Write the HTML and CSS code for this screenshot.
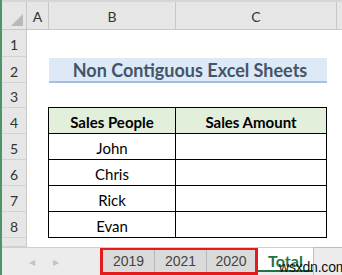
FILE: index.html
```html
<!DOCTYPE html>
<html>
<head>
<meta charset="utf-8">
<link rel="stylesheet" href="styles.css">
</head>
<body>
<div class="app">
  <div class="topstrip"></div>
  <div class="sheet">
    <div class="corner"><span class="tri"></span></div>
    <div class="colhdr">A</div>
    <div class="colhdr">B</div>
    <div class="colhdr c">C</div>
    <div class="colhdr last"></div>

    <div class="rowhdr">1</div><div class="blank span4"></div>
    <div class="rowhdr">2</div><div class="blank"></div><div class="title">Non Contiguous Excel Sheets</div><div class="blank"></div>
    <div class="rowhdr">3</div><div class="blank span4"></div>
    <div class="rowhdr">4</div><div class="blank"></div><div class="cell th first top">Sales People</div><div class="cell th top">Sales Amount</div><div class="blank"></div>
    <div class="rowhdr">5</div><div class="blank"></div><div class="cell first">John</div><div class="cell"></div><div class="blank"></div>
    <div class="rowhdr">6</div><div class="blank"></div><div class="cell first">Chris</div><div class="cell"></div><div class="blank"></div>
    <div class="rowhdr">7</div><div class="blank"></div><div class="cell first">Rick</div><div class="cell"></div><div class="blank"></div>
    <div class="rowhdr">8</div><div class="blank"></div><div class="cell first">Evan</div><div class="cell"></div><div class="blank"></div>
    <div class="rowhdr"></div><div class="blank span4"></div>
  </div>
  <div class="tabbar">
    <div class="nav">
      <span class="arrow">&#9664;</span>
      <span class="arrow">&#9654;</span>
    </div>
    <div class="group">
      <div class="tab">2019</div>
      <div class="tab">2021</div>
      <div class="tab">2020</div>
    </div>
    <div class="tab active">Total</div>
    <div class="tailbox"></div>
    <div class="watermark">wsxdn.com</div>
  </div>
</div>
</body>
</html>
```

FILE: styles.css
```css
html, body {
  margin: 0;
  padding: 0;
  background: #ffffff;
}
body {
  width: 342px;
  height: 275px;
  overflow: hidden;
  font-family: Lato, "Open Sans", sans-serif;
}
.app {
  position: relative;
  width: 340px;
  height: 275px;
  border-left: 2px solid #4f9466;
  display: flex;
  flex-direction: column;
}
.topstrip {
  height: 2px;
  background: #d6d6d6;
}
.sheet {
  display: grid;
  grid-template-columns: 25px 22px 127px 151px 1fr;
  grid-template-rows: 28px 27px 26px 25px 26px 26px 26px 26px 26px 9px;
}
.corner {
  background: #e6e6e6;
  border-right: 1px solid #c8c8c8;
  border-bottom: 1px solid #c8c8c8;
  position: relative;
}
.tri {
  position: absolute;
  right: 3px;
  bottom: 3px;
  width: 0;
  height: 0;
  border-left: 12px solid transparent;
  border-bottom: 12px solid #b8b8b8;
}
.colhdr {
  background: #e6e6e6;
  border-right: 1px solid #c8c8c8;
  border-bottom: 1px solid #c8c8c8;
  color: #333;
  font-size: 14px;
  display: flex;
  align-items: center;
  justify-content: center;
  padding-top: 2px;
}
.colhdr.c {
  margin-right: -10px;
  position: relative;
  z-index: 1;
}
.colhdr.last {
  border-right: none;
}
.rowhdr {
  background: #e6e6e6;
  border-right: 1px solid #c8c8c8;
  border-bottom: 1px solid #d2d2d2;
  color: #333;
  font-size: 14px;
  display: flex;
  align-items: center;
  justify-content: center;
  padding-top: 3px;
}
.blank { background: #fff; }
.span4 { grid-column: span 4; }
.title {
  grid-column: span 2;
  background: #dde9f6;
  border-bottom: 2px solid #9fc0e4;
  color: #44546a;
  font-weight: bold;
  font-size: 18px;
  display: flex;
  align-items: center;
  justify-content: center;
  margin-top: 1px;
  padding-left: 4px;
}
.cell {
  border-right: 1px solid #000;
  border-bottom: 1px solid #000;
  font-size: 15px;
  color: #000;
  display: flex;
  align-items: center;
  justify-content: center;
  padding-top: 2px;
}
.cell.first {
  border-left: 1px solid #000;
  margin-left: -1px;
}
.cell.top {
  border-top: 1px solid #000;
  margin-top: -1px;
}
.cell.th {
  background: #e2efda;
  font-weight: bold;
}
.tabbar {
  flex: 1;
  display: flex;
  align-items: stretch;
  background: #ececec;
  border-top: 1px solid #cfcfcf;
  position: relative;
}
.nav {
  width: 98px;
  display: flex;
  align-items: center;
  gap: 18px;
  padding-left: 27px;
  box-sizing: border-box;
}
.arrow {
  color: #c4c4c4;
  font-size: 8px;
}
.group {
  display: flex;
  border: 3px solid #e31b1b;
  border-top-width: 2px;
  height: 22px;
  width: 152px;
}
.tab {
  font-family: "Liberation Sans", Arial, sans-serif;
  font-size: 14px;
  color: #444;
  background: #dadada;
  display: flex;
  align-items: center;
  justify-content: center;
  width: 52px;
  border-right: 1px solid #b8b8b8;
  box-sizing: border-box;
}
.group .tab:last-child {
  border-right: none;
  width: 48px;
}
.tab.active {
  background: #fff;
  color: #217346;
  font-family: Lato, sans-serif;
  font-weight: bold;
  font-size: 16px;
  width: 55px;
  border-right: none;
  border-bottom: 2px solid #217346;
  margin-bottom: 3px;
  align-items: flex-start;
  padding-top: 5px;
  line-height: 16px;
  overflow: hidden;
}
.tailbox {
  flex: 1;
  background: #ececec;
  border-left: 1px solid #bdbdbd;
  border-top: 1px solid #bdbdbd;
  margin-top: -1px;
}
.watermark {
  position: absolute;
  left: 277px;
  top: 11px;
  font-family: "Liberation Sans", Arial, sans-serif;
  font-size: 14px;
  color: #111;
  letter-spacing: -0.2px;
}
```
